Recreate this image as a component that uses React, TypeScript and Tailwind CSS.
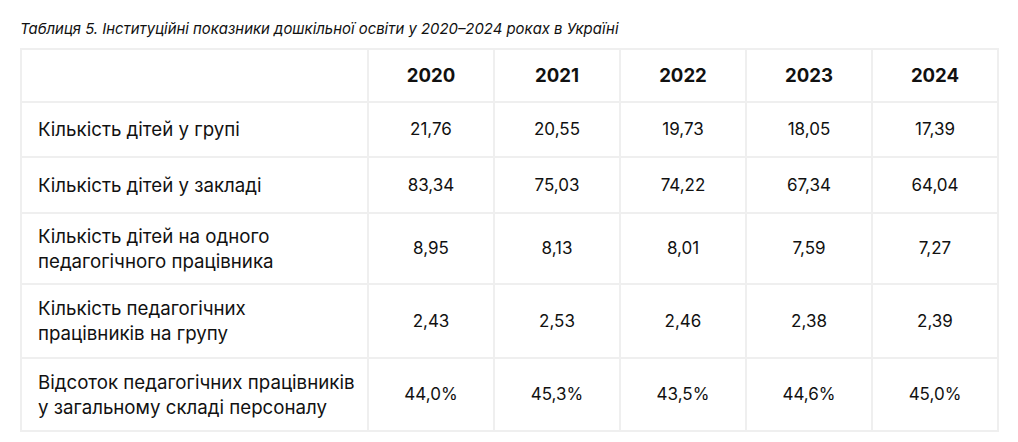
import React from "react";

const years = ["2020", "2021", "2022", "2023", "2024"];

const rows: { label: string[]; values: string[]; h: string }[] = [
  { label: ["Кількість дітей у групі"], values: ["21,76", "20,55", "19,73", "18,05", "17,39"], h: "h-[55px]" },
  { label: ["Кількість дітей у закладі"], values: ["83,34", "75,03", "74,22", "67,34", "64,04"], h: "h-[56px]" },
  { label: ["Кількість дітей на одного", "педагогічного працівника"], values: ["8,95", "8,13", "8,01", "7,59", "7,27"], h: "h-[71px]" },
  { label: ["Кількість педагогічних", "працівників на групу"], values: ["2,43", "2,53", "2,46", "2,38", "2,39"], h: "h-[74px]" },
  { label: ["Відсоток педагогічних працівників", "у загальному складі персоналу"], values: ["44,0%", "45,3%", "43,5%", "44,6%", "45,0%"], h: "h-[73px]" },
];

export default function App() {
  return (
    <div className="w-[1018px] h-[442px] bg-white text-[#111111] font-['Inter',sans-serif]">
      <div className="pl-[20px] pt-[19px]">
        <div className="text-[14.9px] leading-[20px] italic h-[29px]">
          Таблиця 5. Інституційні показники дошкільної освіти у 2020–2024 роках в Україні
        </div>
        <table className="table-fixed border-collapse w-[977px]">
          <colgroup>
            <col className="w-[347px]" />
            <col className="w-[126px]" />
            <col className="w-[126px]" />
            <col className="w-[126px]" />
            <col className="w-[126px]" />
            <col className="w-[126px]" />
          </colgroup>
          <thead>
            <tr className="h-[53px]">
              <th className="border-2 border-[#efefef]"></th>
              {years.map((y) => (
                <th key={y} className="border-2 border-[#efefef] text-center text-[18.6px] font-bold">
                  {y}
                </th>
              ))}
            </tr>
          </thead>
          <tbody>
            {rows.map((r, i) => (
              <tr key={i} className={r.h}>
                <td className="border-2 border-[#efefef] pl-[16px] text-[18.7px] leading-[25px] align-middle">
                  {r.label.map((l, j) => (
                    <div key={j}>{l}</div>
                  ))}
                </td>
                {r.values.map((v, j) => (
                  <td key={j} className="border-2 border-[#efefef] text-center text-[17px] leading-[25px] align-middle">
                    {v}
                  </td>
                ))}
              </tr>
            ))}
          </tbody>
        </table>
      </div>
    </div>
  );
}
